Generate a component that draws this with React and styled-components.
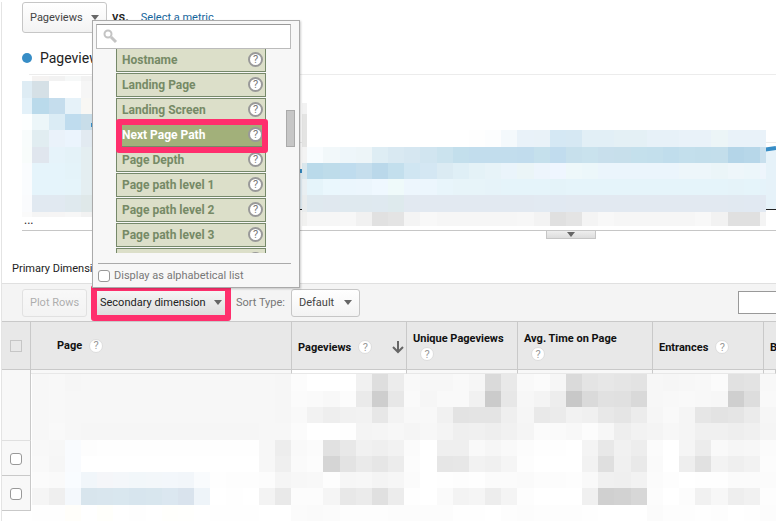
import React from "react";
import styled, { createGlobalStyle } from "styled-components";

const GlobalStyle = createGlobalStyle`
  * {
    box-sizing: border-box;
  }
  body {
    margin: 0;
    background: #fff;
    color: #222;
    font-family: Roboto, "Liberation Sans", sans-serif;
    font-size: 11px;
    overflow: hidden;
  }
  button, input {
    font: inherit;
  }
`;

const Page = styled.main`
  margin-left: 1px;
  border-left: 1px solid #e4e4e4;
`;

const MetricBar = styled.div`
  display: flex;
  align-items: center;
  height: 31px;
  margin: 2px 0 0 20px;
`;

const MenuButton = styled.button`
  display: flex;
  flex: none;
  align-items: center;
  justify-content: space-between;
  width: ${({ $width }) => $width}px;
  height: ${({ $height }) => $height || 28}px;
  padding: 0 7px;
  border: 1px solid #c6c6c6;
  border-radius: 3px;
  background: linear-gradient(#fff, #f3f3f3);
  color: #444;
  white-space: nowrap;
  opacity: ${({ disabled }) => (disabled ? 0.4 : 1)};
`;

const Caret = styled.span`
  border: 4px solid transparent;
  border-top: 5px solid #666;
  border-bottom: 0;
`;

const Versus = styled.span`
  margin: 0 12px 0 5px;
  padding-bottom: 3px;
  font-size: 13px;
  font-weight: 500;
`;

const MetricLink = styled.a`
  color: #15649b;
  text-decoration: none;
`;

const Legend = styled.div`
  display: flex;
  align-items: center;
  gap: 8px;
  height: 41px;
  padding: 8px 0 0 20px;
  font-size: 14px;
`;

const Dot = styled.span`
  width: 10px;
  height: 10px;
  border-radius: 50%;
  background: #378dc6;
`;

const Chart = styled.div`
  height: 157px;
  margin-left: 20px;
  border-bottom: 1px solid #c6c6c6;
  overflow: hidden;

  svg {
    display: block;
  }
`;

const Expander = styled.button`
  display: grid;
  place-items: center;
  width: 50px;
  height: 8px;
  margin: 0 0 0 544px;
  padding: 0;
  border: 1px solid #c6c6c6;
  border-top: 0;
  background: linear-gradient(#eee, #ddd);
`;

const PrimaryRow = styled.div`
  height: 44px;
  padding: 21px 0 0 10px;
  line-height: 17px;
`;

const Toolbar = styled.div`
  display: flex;
  align-items: center;
  height: 38px;
  padding-left: 20px;
  border-top: 1px solid #e0e0e0;
  background: #f4f4f4;
`;

const DimensionButton = styled(MenuButton)`
  margin-left: 4px;
  padding: 0 3px;
  border: 6px solid #ff2f6d;
  background: linear-gradient(#f5f5f5, #dedede) padding-box;
  color: #222;
`;

const SortLabel = styled.span`
  margin: 0 6px 0 5px;
  color: #777;
`;

const TableSearch = styled.input`
  width: 38px;
  height: 23px;
  margin: 0 0 0 auto;
  border: 1px solid #999;
  border-right: 0;
  background: #fff;
`;

const Report = styled.table`
  width: 100%;
  table-layout: fixed;
  border-collapse: separate;
  border-spacing: 0;
`;

const HeadCell = styled.th`
  height: 49px;
  padding: ${({ $pad }) => $pad || "3px 6px 0"};
  border: solid #c9c9c9;
  border-width: 1px 1px 1px 0;
  background: #e8e8e8;
  color: #111;
  font-weight: 700;
  line-height: 17px;
  text-align: left;
  white-space: nowrap;

  &:last-child {
    border-right: 0;
  }
`;

const HeadLine = styled.div`
  display: flex;
  flex-direction: ${({ $stacked }) => ($stacked ? "column" : "row")};
  align-items: ${({ $stacked }) => ($stacked ? "flex-start" : "center")};
  column-gap: 7px;
`;

const Sort = styled.span`
  display: flex;
  margin-left: auto;
  margin-right: -4px;
`;

const Help = styled.button`
  display: grid;
  flex: none;
  place-items: center;
  width: ${({ $ring }) => ($ring ? 15 : 14)}px;
  height: ${({ $ring }) => ($ring ? 15 : 14)}px;
  margin: 0 0 ${({ $ring }) => ($ring ? 2 : 0)}px ${({ $indent }) => $indent || 0}px;
  padding: 0;
  border: ${({ $ring }) => ($ring ? "2px solid #999" : "1px solid #ddd")};
  border-radius: 50%;
  background: #fff;
  color: ${({ $ring }) => ($ring ? "#777" : "#999")};
  font-size: 11px;
  font-weight: 400;
  line-height: 11px;
`;

const BodyRow = styled.tr`
  height: ${({ $height }) => $height}px;
`;

const SelectCell = styled.td`
  padding: 0;
  border: solid #c9c9c9;
  border-width: 0 1px 1px 0;
  border-bottom-color: ${({ $light }) => ($light ? "#e0e0e0" : "#c9c9c9")};
  background: #f8f8f8;
  text-align: center;
`;

const StubCell = styled.td`
  padding: 0;
  border-right: 1px solid #c9c9c9;
  border-bottom: 1px solid #e8e8e8;
  background: ${({ $fill }) => $fill || "#f8f8f8"};
`;

const DataCell = styled.td`
  padding: 0;
  vertical-align: top;

  svg {
    display: block;
  }
`;

const Tick = styled.input`
  appearance: none;
  display: inline-block;
  width: 12px;
  height: 12px;
  margin: 0;
  border: 1px solid ${({ disabled }) => (disabled ? "#c6c6c6" : "#999")};
  border-radius: ${({ disabled }) => (disabled ? 0 : 3)}px;
  background: ${({ disabled }) => (disabled ? "#e8e8e8" : "#fff")};
  vertical-align: middle;
`;

const Dropdown = styled.section`
  position: absolute;
  top: 20px;
  left: 92px;
  width: 208px;
  padding: 3px 8px 0 3px;
  border: 1px solid #aaa;
  background: #f7f7f7;
  box-shadow: 1px 1px 2px rgba(0, 0, 0, 0.2);
`;

const SearchBox = styled.label`
  display: flex;
  align-items: center;
  height: 25px;
  padding-left: 6px;
  border: 1px solid #bbb;
  border-top-color: #999;
  background: #fff;

  input {
    flex: 1;
    min-width: 0;
    border: 0;
    outline: 0;
  }
`;

const ListArea = styled.div`
  display: flex;
  justify-content: space-between;
  height: 204px;
  margin-right: -4px;
  overflow: hidden;
`;

const Options = styled.ul`
  display: flex;
  flex-direction: column;
  gap: 1px;
  width: 150px;
  margin: -1px 0 0 20px;
  padding: 0;
  list-style: none;
`;

const Option = styled.li`
  position: relative;
  display: flex;
  flex: none;
  align-items: center;
  justify-content: space-between;
  height: 24px;
  padding: 0 2px 0 5px;
  border: 1px solid #76896a;
  background: ${({ $active }) => ($active ? "#a2b07a" : "#dcdfc9")};
  color: ${({ $active }) => ($active ? "#fff" : "#768a66")};
  font-size: 12px;
  font-weight: 700;
  z-index: ${({ $active }) => ($active ? 1 : 0)};

  &::after {
    content: "";
    display: ${({ $active }) => ($active ? "block" : "none")};
    position: absolute;
    inset: -5px -3px -7px -1px;
    border: 6px solid #ff2f6d;
    border-radius: 3px;
    pointer-events: none;
  }
`;

const Thumb = styled.div`
  width: 9px;
  height: 37px;
  margin-top: 61px;
  border: 1px solid #aaa;
  background: #c6c6c6;
`;

const Alphabetical = styled.label`
  display: flex;
  align-items: center;
  gap: 4px;
  height: 24px;
  margin: 10px 0 0 2px;
  border-top: 1px solid #aaa;
  color: #777;
`;

const CELL_X = 16.17;
const CELL_Y = 16.28;

const chartLeft = {
  col: 1,
  row: 4,
  rows: [
    "ffffff f5f3f2 f2f2f2 f6f8f8 f2f2f2",
    "deecf4 d5e0e6 ffffff ffffff f6f6f6",
    "e3f1f9 badaeb c5dded e6f2f9 f8f7f4",
    "fdffff ecf6f9 dbecf5 bfdcee c8dde9",
    "f8fcfc e1edf1 eaf2fa ebf4fd e2eaf1",
    "f8fcfb e0e6ee e6f3fa e4f2f8 e4eef1",
    "fafcfe e5f4fb e5f4fb e4f3f9 e4eef1",
    "fafcfe e5f4fb e5f4fb e5f4fa e4eef1",
    "fafbfd e1e9f1 e1e9f1 dfe9ee dfe8e9",
    "fafafa f5f5f5 f6f5f5 f7f7f7 f2f2f2",
  ],
};

const chartRight = {
  col: 18,
  row: 8,
  rows: [
    "e4e4e3 ffffff ffffff ffffff ffffff ffffff ffffff ffffff ffffff ffffff ffffff fefefe fcfdfe f4f9fc e9f2f9 e9f2f8 d5e8f4 d6e8f3 e2eff6 e2eff6 e4f0f5 e4f0f5 e7f1f8 e7f1f8 e9f2f9 e9f2f9 ecf5f7 e9f2f9 e9f2f9 e9f2f9",
    "f3f3f3 f8fcfe f2f8fa eef6fa edf5f8 deedf4 d9e9f2 d6e7f1 d1e5f0 cbe3ee c3dfec c2dded c2dded c2dded c1dced c5e0ec c1dcee c7e0ec c9e2ed c8dfec c7dfeb c4e0ec c3dfec c0ddec c3dfec c2deeb c3deeb b4d5e8 b7d7e9 c8dfed",
    "dae7ed badaea bedcea bfdcee c5deed bad8ea c3dfed d0e6f2 d4e7f3 dbebf3 dfeff6 e4f2f7 e7f3f8 eaf4fb ebf5f7 edf5fc eff6ff eef8fa ecf7fa ebf5fc ebf5fc ebf5fc ebf5fc ebf5fc edf6fa edf6fa ebf5f8 eef6fa ecf6fa eef5fc",
    "e9eff2 e5f4fa eaf7fd ebf6fd ecf6fd eff8ff effafa edf6fd ecf6fd e8f5fb e7f4f9 e7f4f9 e6f3f9 e5f4fa e5f4fa e5f4fa e4f3f9 e5f4fa e5f4fa e5f4fa e5f4fa e5f4fa e5f4fa e5f4fa e5f4fa e5f4fa e5f4fa e5f3f9 e5f4fa e5f3fa",
    "e9eced dfe9ef e0e8ef dfe9ef dfe9ef dfe9f0 deeaed e2e9f1 e2e9f1 e2e9f1 e2e9f1 e2e9f1 e2e9f1 e2e9f1 e2e9f1 e2eaf2 e1e9f2 e2e9f1 e2e9f1 e2e9f1 e2e9f1 e2e9f1 e2e9f1 e2e9f1 e2e9f1 e2e9f1 e2e9f1 e1e9f1 e1e9f2 e2e9f2",
    "f1f1f0 f6f6f6 f6f6f6 f7f7f7 f1f1f1 e1e1e1 e4e4e4 f4f4f4 f8f8f8 f6f6f6 f6f6f6 f6f6f6 f6f6f6 f6f6f6 f7f7f7 f3f3f3 e0e0e0 e4e4e4 f4f4f4 f8f8f8 f6f6f6 f6f6f6 f6f6f6 f6f6f6 f6f6f6 f8f8f8 f2f2f2 e0e0e0 e0e0e0 f4f4f4",
  ],
};

// rows start at the page column; two digits stand for a gray
const tableCells = {
  col: 2,
  row: 23,
  rows: [
    "f7 f8 f6 f7 f7 f7 f7 f7 f7 f7 f7 f7 f7 f7 f7 f6 fc ff ff ff f1 de ec f9 f7 f7 f9 f6 da e9 f9 fb f6 da e4 e7 e5 e3 f7 f6 f7 f8 fb e1 e3 f8",
    "f7 f8 f7 f7 f7 f7 f7 f7 f7 f7 f7 f7 f7 f7 f7 f6 fb fa f8 fc ea ce e7 fa f6 f9 f9 f1 cb e7 f7 f4 ed c8 da e1 e0 d9 f7 f8 f9 f8 f7 cf dd f9",
    "f7 f8 f7 f7 f7 f7 f7 f7 f7 f7 f7 f7 f7 f7 f7 f6 f9 f2 ee f1 f2 e7 f3 f8 f8 f1 e3 e4 e4 ef f6 e9 eb f2 f0 e8 e5 ec f6 f9 f5 e6 e3 e5 eb f6",
    "f7 f9 f7 f6 f6 f6 f6 f6 f6 f6 f6 f6 f6 f6 f7 f7 fb ff ff fe f4 f5 f7 f5 f7 f4 ef f0 ee f1 f5 fb fa f8 fc f7 ee f2 f4 f7 f5 f0 f0 ee f0 f5",
    "f8 f7 f9fbfe fd fe fe fe fe fe fe fe fe fe fe f7 ed f9 fb e1 e8 f1 ef f2 fb ff ef ef f9 f6 f9 fc fe fe ff f4 e8 f1 ed fb ff f5 ec f9 f6 f7 fb",
    "f9 f6 f9fbfe ff ff ff ff ff ff ff ff ff ff ff f7 ef fa fc d5 e3 ea e6 ec fc ff e6 e7 f2 f0 f5 fd ff ff ff f2 df f0 e9 fa ff ee e1 f3 ef f2 fc",
    "fb fa f9fcff f1f6fa f5f6f9 f4f7fa f2f7fa f3f7fa f3f7fb f2f6fa f9fbfd fe fd fd fc f5 f7 f8 fd f6 f7 f4 f6 fb ff fe fd fe fb fb fa fc fc fd f9 f0 ef f2 fb fd ff fe fe fb fb fb",
    "f5 ef f4f8fc d8e5ed d9e6ee d9e7ef d7e5ee d8e6ee dbe7f0 d9e3ed eef4f9 ff fe ff f3 e9 fc fc f5 e8 eb e0 ec fe ff fa f3 f5 ed f4 fd ff ff ff f0 d0 d2 d7 fc ff fc f1 f7 ee f1 fd",
    "fe fe fffefa ff fffffb ff fe ff fffffc fffffd ff fe fe fe ff ff fb fa fb fd fd fd fc fc fc fc fe fe ff fd fc fd fd fd fe ff ff ff fb fd fd fe fd ff fe fc",
  ],
};

const columns = [
  { name: "Pageviews", width: 115, sorted: true },
  { name: "Unique Pageviews", width: 111, stacked: true },
  { name: "Avg. Time on Page", width: 135, stacked: true },
  { name: "Entrances", width: 111 },
];

const dimensions = [
  "Hostname",
  "Landing Page",
  "Landing Screen",
  "Next Page Path",
  "Page Depth",
  "Page path level 1",
  "Page path level 2",
  "Page path level 3",
  "Page path level 4",
];

const Mosaic = ({ data, x = 0, y = 0, from = 0, to = 9999, top = 0, bottom = 9999 }) =>
  data.rows.map((row, j) =>
    row.split(" ").map((shade, i) => {
      const left = Math.max(from, Math.round((data.col + i) * CELL_X));
      const right = Math.min(to, Math.round((data.col + i + 1) * CELL_X));
      const up = Math.max(top, Math.round((data.row + j) * CELL_Y));
      const down = Math.min(bottom, Math.round((data.row + j + 1) * CELL_Y));
      return (
        <rect
          key={`${j}-${i}`}
          x={left - x}
          y={up - y}
          width={Math.max(0, right - left)}
          height={Math.max(0, down - up)}
          fill={`#${shade.length === 2 ? shade.repeat(3) : shade}`}
        />
      );
    })
  );

const HelpMark = (props) => (
  <Help type="button" aria-label="Help" {...props}>
    ?
  </Help>
);

const TrafficChart = () => (
  <Chart>
    <svg width="754" height="156" shapeRendering="crispEdges" role="img" aria-label="Pageviews over time">
      <path d="M7 .5H754M70 68.5H754" stroke="#ececec" />
      <path d="M744 75H754V135H744ZM270 97H285V135H270Z" fill="#e6f2f9" />
      <path d="M70 135.5H754" stroke="#222" />
      <path d="M270 97H285M740 76L754 74" stroke="#378dc6" strokeWidth="4" shapeRendering="auto" />
      <Mosaic data={chartLeft} x={22} y={74} from={22} to={92} top={76} bottom={217} />
      <path d="M69 49H70V53H69Z" fill="#378dc6" />
      <path d="M280 29H285V40H280Z" fill="#f2f2f2" />
      <path d="M280 40H285V73H280Z" fill="#e4e4e3" />
      <path d="M285 28H744V56H285Z" fill="#fff" />
      <Mosaic data={chartRight} x={22} y={74} from={302} to={766} bottom={226} />
      <text x="2" y="150" fontSize="12" fill="#222">
        ...
      </text>
    </svg>
  </Chart>
);

const DimensionMenu = () => (
  <Dropdown>
    <SearchBox>
      <svg width="15" height="15" viewBox="0 0 15 15" fill="none" stroke="#c4c4c4">
        <circle cx="5" cy="5" r="3.5" strokeWidth="2" />
        <path d="M8 8L13 13" strokeWidth="3" />
      </svg>
      <input type="text" aria-label="Search dimensions" />
    </SearchBox>
    <ListArea>
      <Options>
        {dimensions.map((name) => (
          <Option key={name} $active={name === "Next Page Path"}>
            {name}
            <HelpMark $ring />
          </Option>
        ))}
      </Options>
      <Thumb />
    </ListArea>
    <Alphabetical>
      <Tick type="checkbox" />
      Display as alphabetical list
    </Alphabetical>
  </Dropdown>
);

const ReportTable = () => (
  <Report>
    <colgroup>
      <col width="29" />
      <col width="261" />
      {columns.map((c) => (
        <col key={c.name} width={c.width} />
      ))}
      <col />
    </colgroup>
    <thead>
      <tr>
        <HeadCell $pad="0 0 0 8px">
          <Tick type="checkbox" disabled aria-label="Select all rows" />
        </HeadCell>
        <HeadCell $pad="0 0 0 26px">
          <HeadLine>
            Page <HelpMark />
          </HeadLine>
        </HeadCell>
        {columns.map(({ name, stacked, sorted }) => (
          <HeadCell key={name} $pad={stacked ? "0 6px" : undefined}>
            <HeadLine $stacked={stacked}>
              {name} <HelpMark $indent={stacked ? 7 : 0} />
              {sorted && (
                <Sort>
                  <svg width="12" height="13" fill="none" stroke="#666" strokeWidth="2">
                    <path d="M6 0V11M1 6L6 11L11 6" />
                  </svg>
                </Sort>
              )}
            </HeadLine>
          </HeadCell>
        ))}
        <HeadCell $pad="3px 0 0 6px">B</HeadCell>
      </tr>
    </thead>
    <tbody>
      <BodyRow $height={4}>
        <SelectCell rowSpan={2} $light />
        <StubCell />
        {columns.map((c) => (
          <StubCell key={c.name} $fill={c.sorted ? "#fff" : undefined} />
        ))}
        <StubCell />
      </BodyRow>
      <BodyRow $height={67}>
        <DataCell colSpan={6} rowSpan={4}>
          <svg width="745" height="147" shapeRendering="crispEdges" role="img" aria-label="Report rows">
            <Mosaic data={tableCells} x={31} y={374} from={31} to={776} />
          </svg>
        </DataCell>
      </BodyRow>
      <BodyRow $height={35}>
        <SelectCell>
          <Tick type="checkbox" aria-label="Select row 1" />
        </SelectCell>
      </BodyRow>
      <BodyRow $height={35}>
        <SelectCell>
          <Tick type="checkbox" aria-label="Select row 2" />
        </SelectCell>
      </BodyRow>
      <BodyRow $height={10} />
    </tbody>
  </Report>
);

export default function App() {
  return (
    <Page>
      <GlobalStyle />
      <MetricBar>
        <MenuButton $width={85} $height={31}>
          Pageviews <Caret />
        </MenuButton>
        <Versus>vs.</Versus>
        <MetricLink href="#metric">Select a metric</MetricLink>
      </MetricBar>
      <Legend>
        <Dot />
        Pageviews
      </Legend>
      <TrafficChart />
      <Expander aria-label="Toggle chart">
        <Caret />
      </Expander>
      <PrimaryRow>Primary Dimension:</PrimaryRow>
      <Toolbar>
        <MenuButton $width={65} disabled>
          Plot Rows
        </MenuButton>
        <DimensionButton $width={140} $height={36}>
          Secondary dimension <Caret />
        </DimensionButton>
        <SortLabel>Sort Type:</SortLabel>
        <MenuButton $width={69}>
          Default <Caret />
        </MenuButton>
        <TableSearch type="text" aria-label="Search table" />
      </Toolbar>
      <ReportTable />
      <DimensionMenu />
    </Page>
  );
}
